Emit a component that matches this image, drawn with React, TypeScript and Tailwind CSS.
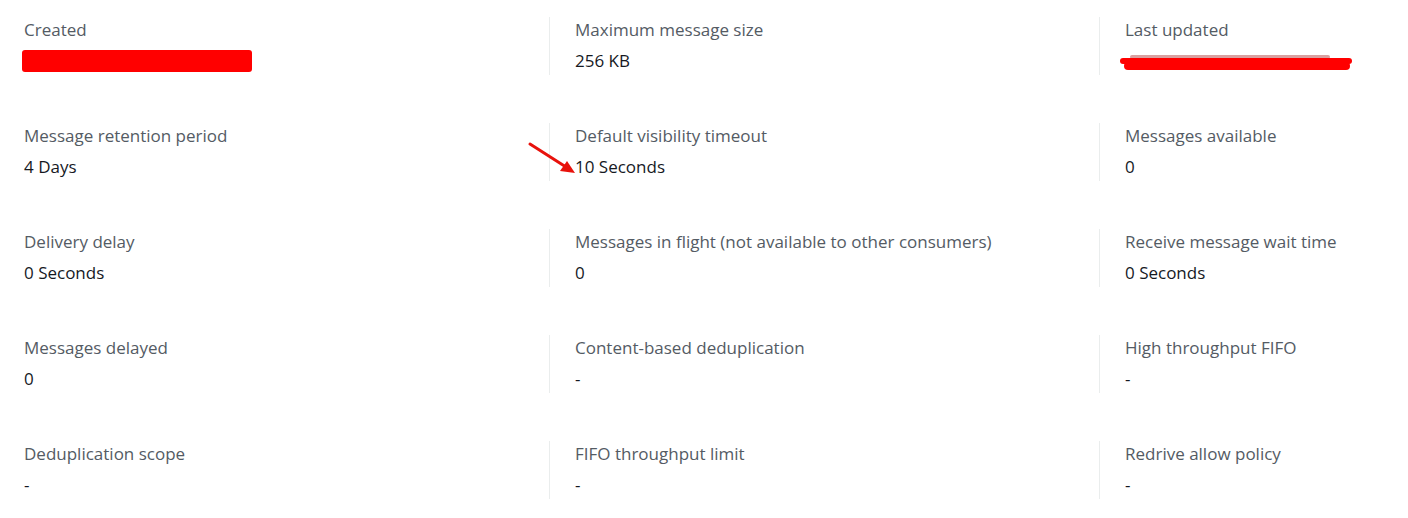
const rows: [string, string][][] = [
  [
    ["Created", "__redact1"],
    ["Maximum message size", "256 KB"],
    ["Last updated", "__redact2"],
  ],
  [
    ["Message retention period", "4 Days"],
    ["Default visibility timeout", "10 Seconds"],
    ["Messages available", "0"],
  ],
  [
    ["Delivery delay", "0 Seconds"],
    ["Messages in flight (not available to other consumers)", "0"],
    ["Receive message wait time", "0 Seconds"],
  ],
  [
    ["Messages delayed", "0"],
    ["Content-based deduplication", "-"],
    ["High throughput FIFO", "-"],
  ],
  [
    ["Deduplication scope", "-"],
    ["FIFO throughput limit", "-"],
    ["Redrive allow policy", "-"],
  ],
]

function Value({ v }: { v: string }) {
  if (v === "__redact1") {
    return (
      <div className="flex h-6 items-center">
        <div className="-ml-[2px] h-[22px] w-[230px] rounded-[3px] bg-[#ff0000]" />
      </div>
    )
  }
  if (v === "__redact2") {
    return (
      <div className="flex h-6 items-center">
        <div className="relative -ml-[5px] mt-[5px] h-[14px] w-[232px]">
          <div className="absolute left-[10px] top-[-2px] h-[4px] w-[200px] rounded-full bg-[#d9a0a0]" />
          <div className="absolute left-0 top-[1px] h-[6px] w-full rounded-full bg-[#ff0000]" />
          <div className="absolute left-[4px] top-[5px] h-[8px] w-[226px] rounded-full bg-[#ff0000]" />
        </div>
      </div>
    )
  }
  return <div className="leading-6 text-[#16191f]">{v}</div>
}

export default function App() {
  return (
    <div
      className="relative h-[518px] w-[1408px] overflow-hidden bg-white pt-[17px] text-[17px]"
      style={{ fontFamily: '"Open Sans", "Noto Sans", sans-serif' }}
    >
      <div className="flex flex-col gap-[48px]">
        {rows.map((row, i) => (
          <div key={i} className="grid grid-cols-[549px_550px_1fr]">
            {row.map(([label, value], j) => (
              <div
                key={j}
                className={
                  j === 0
                    ? "h-[58px] py-[1px] pl-[24px]"
                    : "h-[58px] border-l border-[#eaeded] py-[1px] pl-[25px]"
                }
              >
                <div className="leading-6 text-[#545b64]">{label}</div>
                <div className="mt-[7px]">
                  <Value v={value} />
                </div>
              </div>
            ))}
          </div>
        ))}
      </div>

      {/* red arrow annotation */}
      <svg className="absolute left-[526px] top-[140px]" width="52" height="38" viewBox="0 0 52 38">
        <line x1="4" y1="4" x2="40" y2="27" stroke="#e8120c" strokeWidth="3" strokeLinecap="round" />
        <polygon points="49,33 34,31 41,21" fill="#e8120c" />
      </svg>
    </div>
  )
}
